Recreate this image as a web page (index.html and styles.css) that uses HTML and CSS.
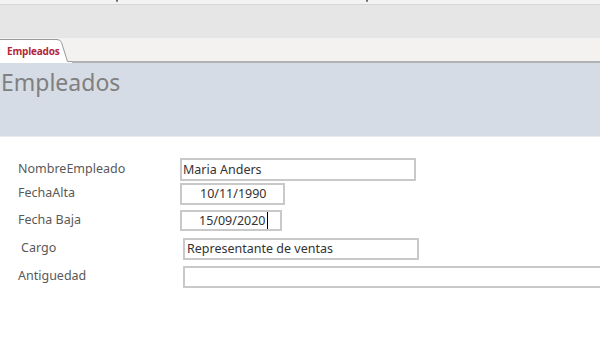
FILE: index.html
```html
<!DOCTYPE html>
<html lang="es">
<head>
<meta charset="utf-8">
<title>Empleados</title>
<link rel="stylesheet" href="styles.css">
</head>
<body>
<div class="app">
  <div class="topstrip">
    <span class="frag frag-1"></span>
    <span class="frag frag-2"></span>
  </div>
  <div class="ribbon"></div>
  <div class="tabbar">
    <div class="tab">
      <svg class="tab-shape" width="72" height="25" viewBox="0 0 72 25" aria-hidden="true">
        <path d="M0 1.5 H57 Q60.5 1.5 61.5 4.5 L67.5 24 H72 V25 H0 Z" fill="#ffffff"/>
        <path d="M0 1.5 H57 Q60.5 1.5 61.5 4.5 L67.5 23.5 H72" fill="none" stroke="#9a9a9a" stroke-width="1"/>
      </svg>
      <span class="tab-label">Empleados</span>
    </div>
    <div class="tab-rest"></div>
  </div>
  <div class="header">
    <h1 class="title">Empleados</h1>
  </div>
  <div class="form">
    <div class="row row-1">
      <span class="label">NombreEmpleado</span>
      <div class="field field-name">Maria Anders</div>
    </div>
    <div class="row row-2">
      <span class="label">FechaAlta</span>
      <div class="field field-date">10/11/1990</div>
    </div>
    <div class="row row-3">
      <span class="label">Fecha Baja</span>
      <div class="field field-date2">15/09/2020<span class="caret"></span></div>
    </div>
    <div class="row row-4">
      <span class="label label-cargo">Cargo</span>
      <div class="field field-cargo">Representante de ventas</div>
    </div>
    <div class="row row-5">
      <span class="label label-wide">Antiguedad</span>
      <div class="field field-wide"></div>
    </div>
  </div>
</div>
</body>
</html>
```

FILE: styles.css
```css
* { box-sizing: border-box; }
html, body { margin: 0; padding: 0; }
body {
  width: 600px;
  height: 337px;
  overflow: hidden;
  background: #ffffff;
  font-family: "Noto Sans", "Open Sans", sans-serif;
}
.app { display: flex; flex-direction: column; width: 600px; }

.topstrip {
  height: 5px;
  background: #f3f3f3;
  border-bottom: 1px solid #d6d6d6;
  display: flex;
  align-items: flex-start;
}
.frag {
  width: 2px;
  height: 2px;
  background: #6a6a6a;
  border-radius: 0 0 1px 1px;
}
.frag-1 { margin-left: 116px; }
.frag-2 { margin-left: 248px; }

.ribbon { height: 33px; background: #e6e6e6; }

.tabbar {
  height: 25px;
  display: flex;
  background: #f3f2f0;
}
.tab {
  position: relative;
  width: 72px;
  height: 25px;
  flex-shrink: 0;
  display: flex;
  align-items: center;
  padding-left: 7px;
}
.tab-shape { position: absolute; left: 0; top: 0; }
.tab-label {
  position: relative;
  font-family: "Open Sans", "Noto Sans", sans-serif;
  font-size: 10px;
  font-weight: 700;
  color: #b3263a;
  letter-spacing: -0.2px;
  margin-top: 1px;
}
.tab-rest {
  flex: 1;
  border-bottom: 2px solid #b2b2b2;
}

.header {
  height: 74px;
  background: #d6dce5;
  border-bottom: 1px solid #e8ecf1;
}
.title {
  margin: 0;
  padding: 4px 0 0 1px;
  font-weight: 400;
  font-size: 23px;
  line-height: 30px;
  color: #808080;
}

.form {
  display: flex;
  flex-direction: column;
  padding-top: 21px;
}
.row {
  display: flex;
  align-items: center;
}
.label {
  width: 180px;
  flex-shrink: 0;
  padding-left: 18px;
  padding-bottom: 3px;
  font-size: 12.5px;
  color: #595959;
}
.label-cargo { width: 183px; padding-left: 21px; }
.label-wide { width: 183px; padding-bottom: 4px; }
.row-2 { margin-top: 2px; }
.row-3 { margin-top: 5px; }
.row-4 { margin-top: 7px; }
.row-5 { margin-top: 6px; }

.field {
  flex-shrink: 0;
  height: 22px;
  border: 2px solid #c9c9c9;
  font-size: 12.5px;
  line-height: 18px;
  color: #333333;
  padding-left: 1px;
  display: flex;
  align-items: center;
}
.field-name { width: 236px; height: 23px; }
.field-date { width: 105px; padding-left: 18px; }
.field-date2 { width: 102px; height: 21px; padding-left: 17px; }
.field-cargo { width: 236px; padding-left: 2px; }
.field-wide { width: 430px; }
.caret {
  display: inline-block;
  width: 1px;
  height: 17px;
  background: #000;
  margin-left: 1px;
}
```
